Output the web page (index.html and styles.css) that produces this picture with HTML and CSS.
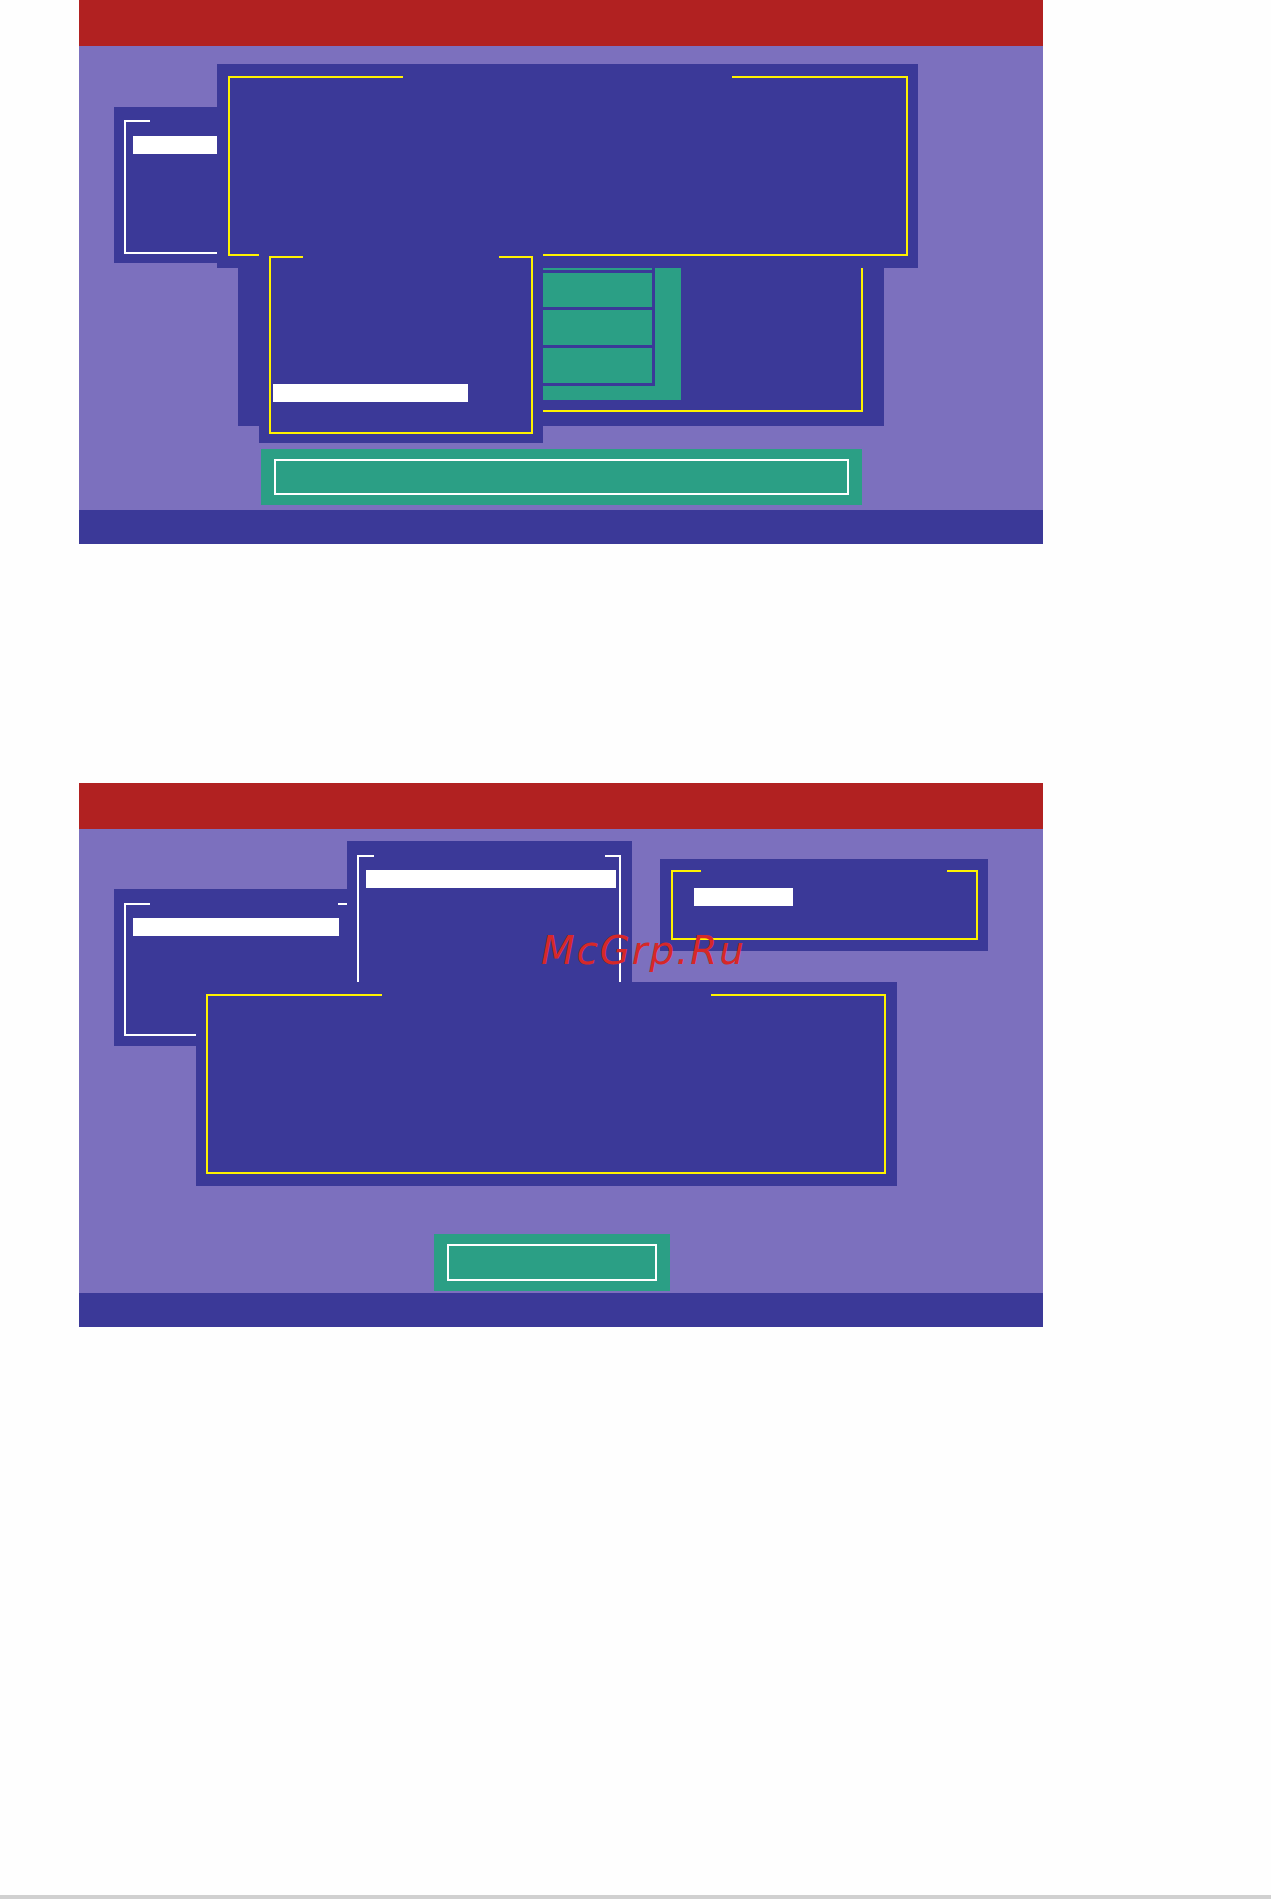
FILE: index.html
```html
<!DOCTYPE html>
<html lang="en">
<head>
<meta charset="utf-8">
<title>Setup screens</title>
<link rel="stylesheet" href="styles.css">
</head>
<body>
<div class="doc">
  <div class="screens">
    <section class="screen">
      <div class="title-bar"></div>
      <div class="desk">
        <div class="win s1-menu">
          <div class="frame white">
            <span class="gap s1-menu-gap"></span>
            <div class="hl s1-menu-hl"></div>
          </div>
        </div>
        <div class="win s1-list">
          <div class="frame yellow">
            <div class="teal-panel">
              <div class="rows">
                <div class="row r0"></div>
                <div class="row r1"></div>
                <div class="row r2"></div>
                <div class="row r3"></div>
              </div>
            </div>
          </div>
        </div>
        <div class="win s1-info">
          <div class="frame yellow">
            <span class="gap s1-info-gap"></span>
          </div>
        </div>
        <div class="win s1-popup">
          <div class="frame yellow">
            <span class="gap s1-popup-gap"></span>
            <div class="hl s1-popup-hl"></div>
          </div>
        </div>
        <div class="btn s1-btn">
          <div class="btn-frame"></div>
        </div>
      </div>
      <div class="status-bar"></div>
    </section>

    <section class="screen">
      <div class="title-bar"></div>
      <div class="desk">
        <div class="win s2-a">
          <div class="frame white">
            <span class="gap s2-a-gap"></span>
            <div class="hl s2-a-hl"></div>
          </div>
        </div>
        <div class="win s2-b">
          <div class="frame white">
            <span class="gap s2-b-gap"></span>
            <div class="hl s2-b-hl"></div>
          </div>
        </div>
        <div class="win s2-d">
          <div class="frame yellow">
            <span class="gap s2-d-gap"></span>
            <div class="hl s2-d-hl"></div>
          </div>
        </div>
        <div class="win s2-c">
          <div class="frame yellow">
            <span class="gap s2-c-gap"></span>
          </div>
        </div>
        <div class="btn s2-btn">
          <div class="btn-frame"></div>
        </div>
      </div>
      <div class="status-bar"></div>
    </section>
  </div>
  <div class="watermark">McGrp.Ru</div>
</div>
<div class="edge"></div>
</body>
</html>
```

FILE: styles.css
```css
html, body {
  margin: 0;
  padding: 0;
  background: #fefefe;
  font-family: "DejaVu Sans", sans-serif;
}

.doc {
  position: relative;
  min-height: 1895px;
  padding-left: 79px;
  box-sizing: border-box;
}

.screens {
  display: flex;
  flex-direction: column;
  gap: 239px;
  width: 964px;
}

.screen {
  display: flex;
  flex-direction: column;
  height: 544px;
}

.title-bar {
  height: 46px;
  background: #b12121;
}

.desk {
  position: relative;
  flex: 1;
  background: #7c70be;
  overflow: hidden;
}

.status-bar {
  height: 34px;
  background: #3b3998;
}

/* windows */
.win {
  position: absolute;
  box-sizing: border-box;
  background: #3b3998;
}

.frame {
  position: relative;
  box-sizing: border-box;
  height: 100%;
  border: 2px solid #fff200;
}

.frame.white { border-color: #ffffff; }
.frame.yellow { border-color: #fff200; }

.gap {
  position: absolute;
  top: -2px;
  height: 2px;
  background: #3b3998;
}

.hl {
  height: 18px;
  background: #ffffff;
}

.btn {
  position: absolute;
  box-sizing: border-box;
  background: #2b9f85;
  padding: 10px 13px;
}

.btn-frame {
  box-sizing: border-box;
  height: 100%;
  border: 2px solid #ffffff;
}

/* ---------- screen 1 ---------- */
.s1-menu {
  left: 35px;
  top: 61px;
  width: 140px;
  height: 156px;
  padding: 13px 0 9px 10px;
}
.s1-menu-gap { left: 24px; right: -2px; }
.s1-menu-hl { margin: 14px 0 0 7px; }

.s1-info {
  left: 138px;
  top: 18px;
  width: 701px;
  height: 204px;
  padding: 12px 10px 12px 11px;
}
.s1-info-gap { left: 173px; width: 329px; }

.s1-list {
  left: 159px;
  top: 194px;
  width: 646px;
  height: 186px;
  padding: 10px 21px 14px 24px;
}

.teal-panel {
  width: 181px;
  height: 142px;
  margin: 6px 0 0 236px;
  background: #2b9f85;
}

.rows {
  display: flex;
  flex-direction: column;
  gap: 3px;
  width: 155px;
  padding: 0 3px 3px 0;
  box-sizing: border-box;
  background: #3b3998;
}

.row { background: #2b9f85; }
.r0 { height: 12px; }
.r1 { height: 34px; }
.r2 { height: 35px; }
.r3 { height: 35px; }

.s1-popup {
  left: 180px;
  top: 200px;
  width: 284px;
  height: 197px;
  padding: 10px 10px 9px 10px;
}
.s1-popup-gap { left: 32px; width: 196px; }
.s1-popup-hl { width: 195px; margin: 126px 0 0 2px; }

.s1-btn {
  left: 182px;
  top: 403px;
  width: 601px;
  height: 56px;
}

/* ---------- screen 2 ---------- */
.s2-a {
  left: 35px;
  top: 60px;
  width: 245px;
  height: 157px;
  padding: 14px 10px 10px 10px;
}
.s2-a-gap { left: 24px; width: 188px; }
.s2-a-hl { width: 206px; margin: 13px 0 0 7px; }

.s2-b {
  left: 268px;
  top: 12px;
  width: 285px;
  height: 161px;
  padding: 14px 11px 0 10px;
}
.s2-b-gap { left: 15px; width: 231px; }
.s2-b-hl { width: 250px; margin: 13px 0 0 7px; }

.s2-c {
  left: 117px;
  top: 153px;
  width: 701px;
  height: 204px;
  padding: 12px 11px 12px 10px;
}
.s2-c-gap { left: 174px; width: 329px; }

.s2-d {
  left: 581px;
  top: 30px;
  width: 328px;
  height: 92px;
  padding: 11px 10px 11px 11px;
}
.s2-d-gap { left: 28px; width: 246px; }
.s2-d-hl { width: 99px; margin: 16px 0 0 21px; }

.s2-btn {
  left: 355px;
  top: 405px;
  width: 236px;
  height: 57px;
}

/* watermark */
.watermark {
  position: absolute;
  left: 541px;
  top: 931px;
  font-family: "DejaVu Sans", sans-serif;
  font-style: italic;
  font-size: 39px;
  line-height: 1;
  letter-spacing: 1.8px;
  color: #d62828;
  white-space: nowrap;
}

.edge {
  height: 4px;
  background: #d0d0d0;
}
```
